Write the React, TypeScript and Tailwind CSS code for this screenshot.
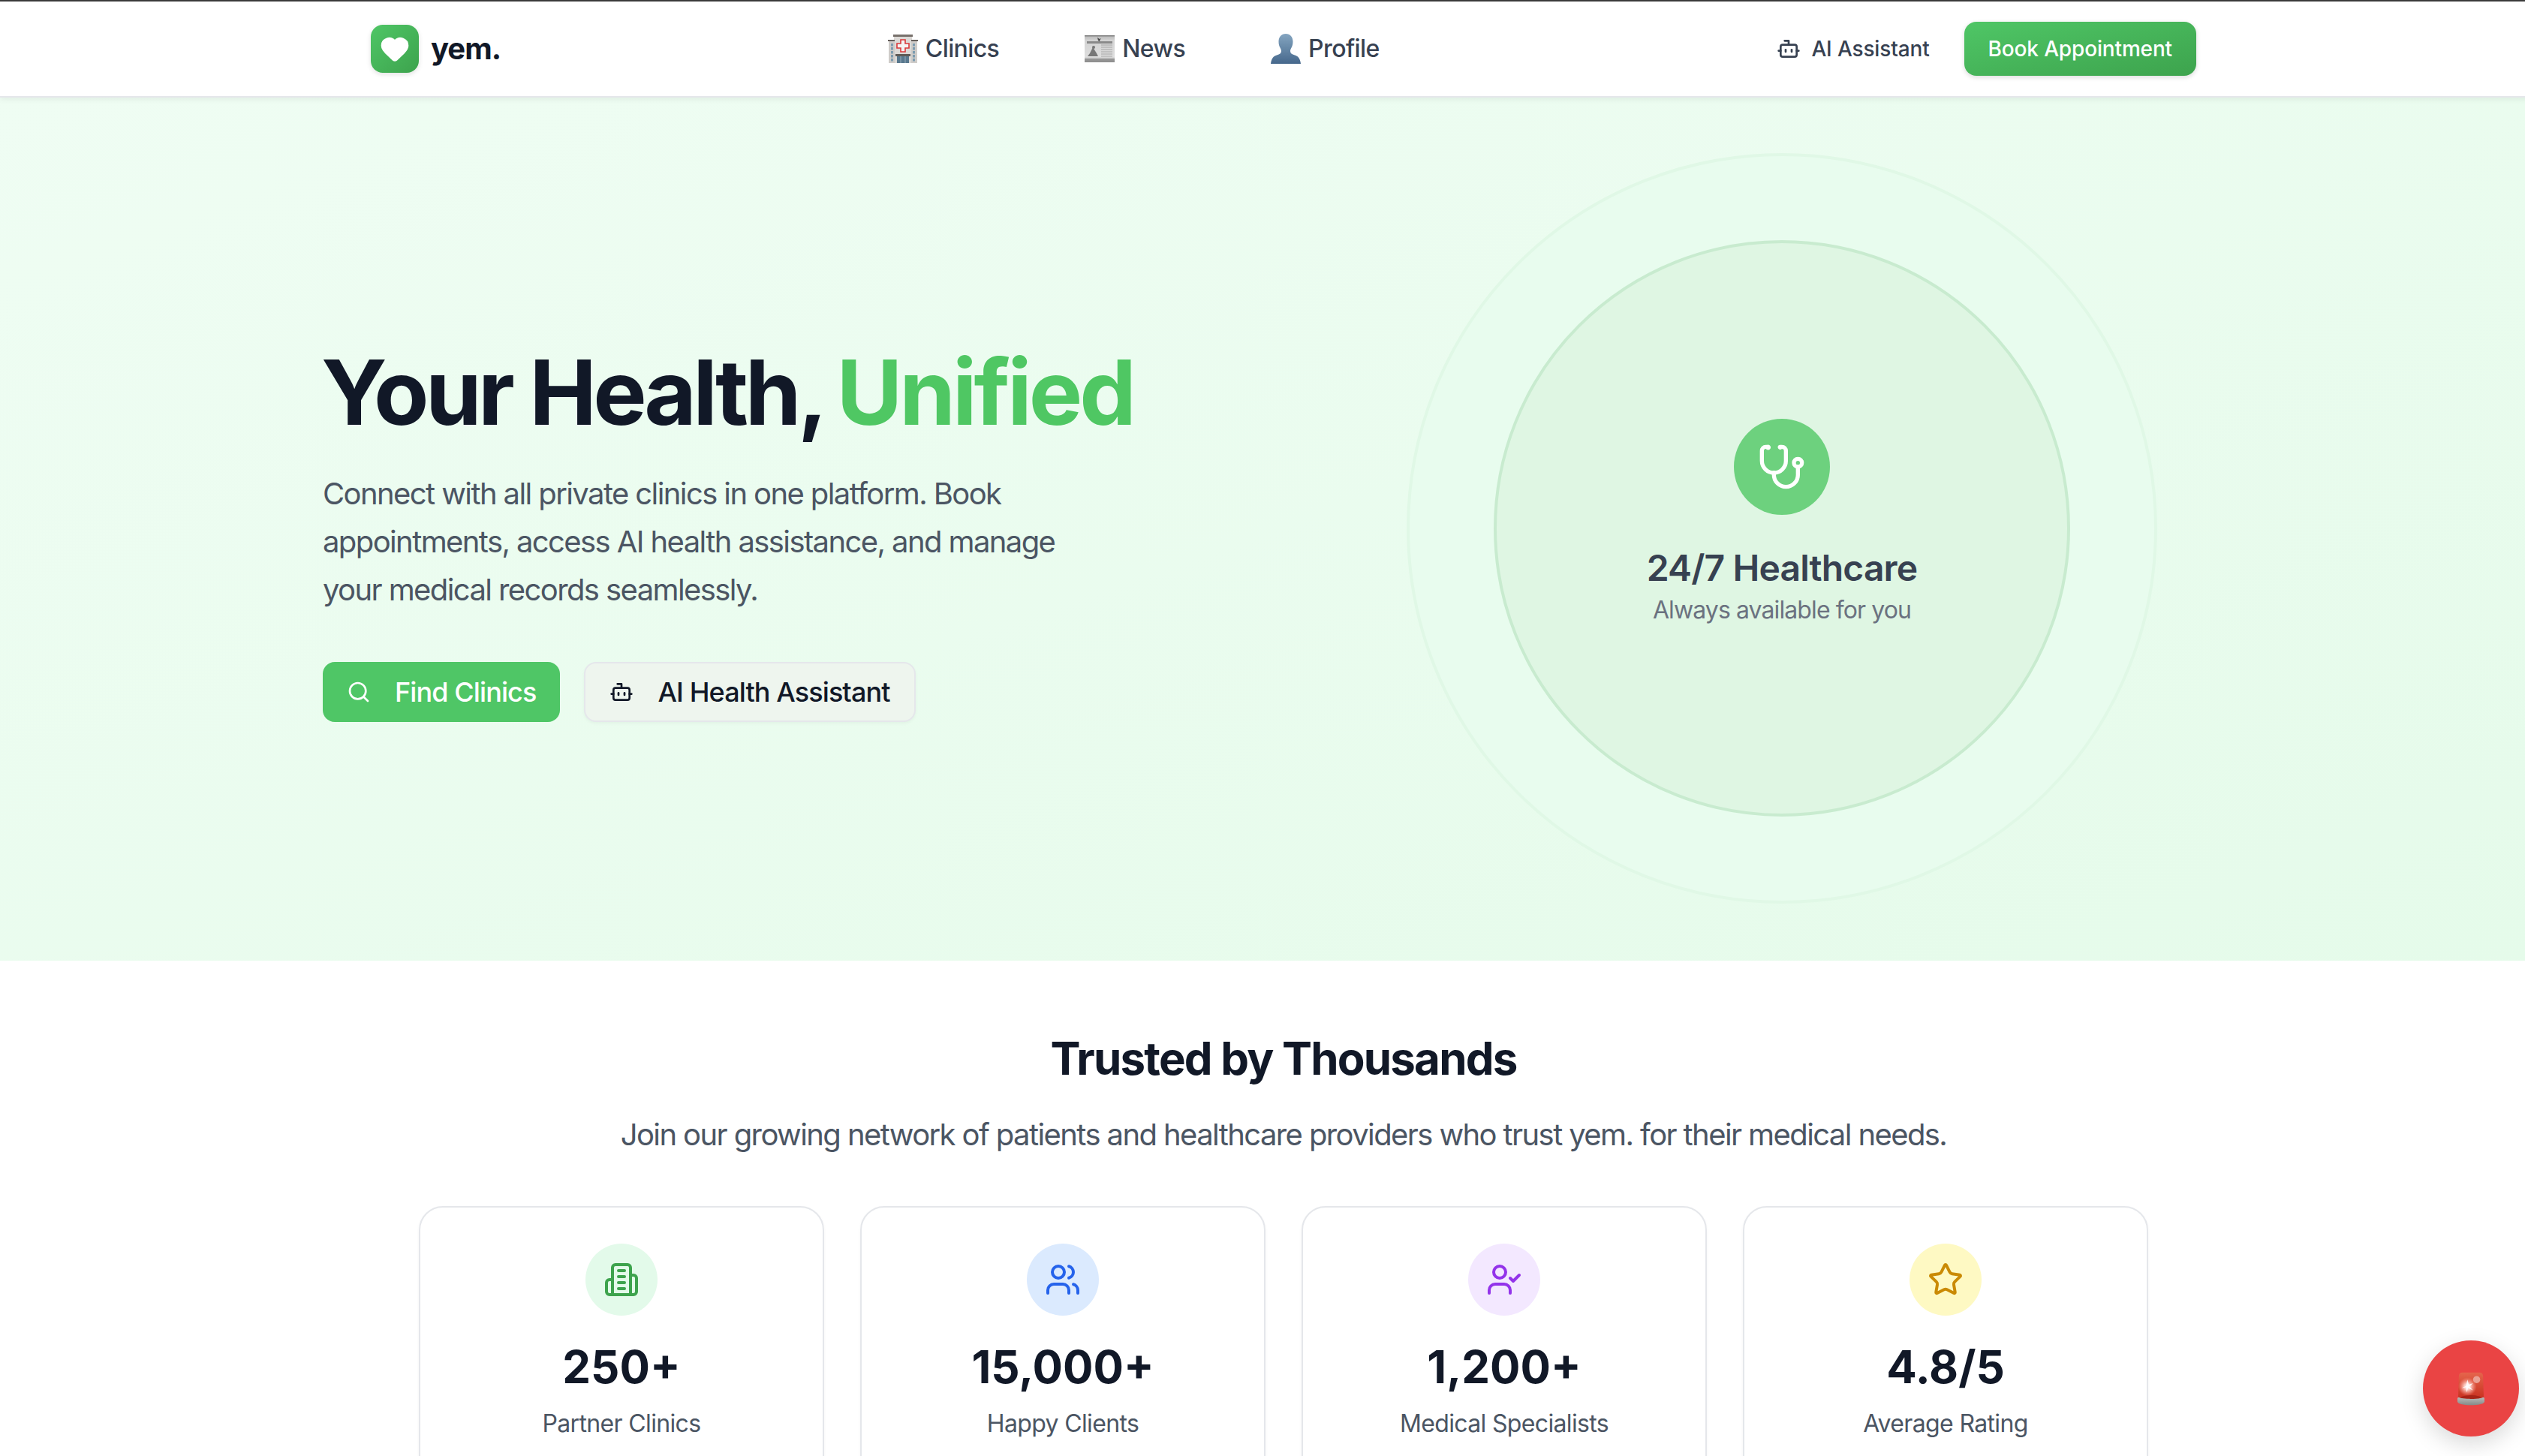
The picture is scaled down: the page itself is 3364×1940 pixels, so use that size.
import { Bot, Heart, Search, Star, UserCheck, Users } from 'lucide-react';
import type { ReactNode } from 'react';

function HospitalEmoji() {
  return (
    <svg width="40" height="40" viewBox="0 0 40 40" className="shrink-0">
      <rect x="8" y="2" width="24" height="37" fill="#dcd9d6" />
      <rect x="7" y="1" width="26" height="3" fill="#77706b" />
      <rect x="1" y="9" width="8" height="30" fill="#cfccc9" />
      <rect x="31" y="9" width="8" height="30" fill="#cfccc9" />
      <rect x="0" y="8" width="9" height="2" fill="#66605c" />
      <rect x="31" y="8" width="9" height="2" fill="#66605c" />
      {[13, 18, 23, 28, 33].map((y) => (
        <g key={y} fill="#7d9cb0">
          <rect x="4" y={y} width="3" height="3.5" />
          <rect x="33" y={y} width="3" height="3.5" />
        </g>
      ))}
      <path d="M17 8h6v5h5v6h-5v5h-6v-5h-5v-6h5z" fill="#f5f3f2" stroke="#d9383a" strokeWidth="1.6" />
      <rect x="10" y="27" width="20" height="3" fill="#5e5a56" />
      <rect x="12" y="30" width="16" height="9" fill="#58788e" />
      <path d="M17 30v9M23 30v9" stroke="#a8bac6" strokeWidth="0.8" />
    </svg>
  );
}

function NewspaperEmoji() {
  return (
    <svg width="40" height="38" viewBox="0 0 40 38" className="shrink-0">
      <defs>
        <linearGradient id="paper" x1="0" y1="0" x2="0" y2="1">
          <stop offset="0" stopColor="#b5b5b5" />
          <stop offset="0.2" stopColor="#d4d4d4" />
          <stop offset="0.8" stopColor="#dedede" />
          <stop offset="1" stopColor="#8c8c8c" />
        </linearGradient>
      </defs>
      <rect x="0" y="1" width="40" height="36" fill="url(#paper)" />
      <rect x="0" y="1" width="40" height="1.5" fill="#7f7f7f" />
      <path d="M17 4l3 2 2-1-2 3 1 2-3-2z" fill="#4b4b4b" />
      <rect x="3" y="9" width="34" height="3" fill="#8a8a8a" />
      <path d="M11 17l5 8 2 4H4l3-4z" fill="#777" />
      <circle cx="12" cy="17" r="2" fill="#777" />
      <path d="M22 14h15M22 17h15M22 20h15M22 23h15M22 26h15M22 29h15" stroke="#a5a5a5" strokeWidth="1.2" />
      <rect x="0" y="32" width="40" height="5" fill="#8d8d8d" opacity="0.8" />
    </svg>
  );
}

function PersonEmoji() {
  return (
    <svg width="40" height="40" viewBox="0 0 40 40" className="shrink-0">
      <defs>
        <linearGradient id="bust" x1="0" y1="0" x2="0" y2="1">
          <stop offset="0" stopColor="#84a5c0" />
          <stop offset="1" stopColor="#46688c" />
        </linearGradient>
      </defs>
      <path
        d="M20 0c6 0 9.500 4.500 9.500 10.500 0 3-.7 5.500-1.700 7.500-.9 1.800-1.800 3-1.800 5 0 3 2 4.300 6 5.600 4 1.300 7 3.500 8 11.400H0c1-7.900 4-10.100 8-11.400 4-1.300 6-2.600 6-5.600 0-2-.9-3.200-1.800-5-1-2-1.700-4.500-1.700-7.500C10.500 4.500 14 0 20 0z"
        fill="url(#bust)"
      />
    </svg>
  );
}

function SirenEmoji() {
  return (
    <svg width="36" height="47" viewBox="0 0 38 48">
      <defs>
        <linearGradient id="dome" x1="0" y1="0" x2="0" y2="1">
          <stop offset="0" stopColor="#e5654c" />
          <stop offset="1" stopColor="#c8301f" />
        </linearGradient>
        <linearGradient id="base" x1="0" y1="0" x2="0" y2="1">
          <stop offset="0" stopColor="#b9bbb9" />
          <stop offset="1" stopColor="#868886" />
        </linearGradient>
        <radialGradient id="flash">
          <stop offset="0" stopColor="#ffffff" />
          <stop offset="0.35" stopColor="#ffd8d0" stopOpacity="0.9" />
          <stop offset="1" stopColor="#ff9d8e" stopOpacity="0" />
        </radialGradient>
      </defs>
      <path d="M2 6c0-3 2-5 5-5h24c3 0 5 2 5 5l1 32H1z" fill="url(#dome)" />
      <ellipse cx="19" cy="37" rx="15" ry="4" fill="#a82417" />
      <circle cx="27" cy="11" r="5" fill="#eeb4aa" opacity="0.8" />
      <circle cx="14" cy="21" r="13" fill="url(#flash)" />
      <path d="M14 11l2 7 6-2-5 5 5 5-7-3-2 6-1-7-6 1 6-3z" fill="#fff" opacity="0.85" />
      <path d="M0 38c0-1 1-2 2-2 4 3 30 3 34 0 1 0 2 1 2 2v4c0 3-8 5-19 5S0 45 0 42z" fill="url(#base)" />
    </svg>
  );
}

function TowerIcon() {
  return (
    <svg width="48" height="48" viewBox="0 0 24 24" fill="none" stroke="#3da34d" strokeWidth="2" strokeLinecap="round" strokeLinejoin="round">
      <path d="M6 22V4a2 2 0 0 1 2-2h8a2 2 0 0 1 2 2v18Z" />
      <path d="M6 12H4a2 2 0 0 0-2 2v6a2 2 0 0 0 2 2h2" />
      <path d="M18 9h2a2 2 0 0 1 2 2v9a2 2 0 0 1-2 2h-2" />
      <path d="M10 6h4" />
      <path d="M10 10h4" />
      <path d="M10 14h4" />
      <path d="M10 18h4" />
    </svg>
  );
}

// older lucide stethoscope, the ear tips hook inward
function StethoscopeIcon() {
  return (
    <svg width="64" height="64" viewBox="0 0 24 24" fill="none" stroke="#ffffff" strokeWidth="2" strokeLinecap="round" strokeLinejoin="round">
      <path d="M4.800 2.300A.3.3 0 1 0 5 2H4a2 2 0 0 0-2 2v5a6 6 0 0 0 6 6a6 6 0 0 0 6-6V4a2 2 0 0 0-2-2h-1a.2.2 0 1 0 .3.3" />
      <path d="M8 15v1a6 6 0 0 0 6 6a6 6 0 0 0 6-6v-4" />
      <circle cx="20" cy="10" r="2" />
    </svg>
  );
}

function NavLink({ icon, label }: { icon: ReactNode; label: string }) {
  return (
    <a className="flex items-center gap-[10px] text-[32px] leading-[48px] font-medium tracking-[-0.6px] text-[#374151]">
      {icon}
      <span>{label}</span>
    </a>
  );
}

function StatCard({ icon, tint, value, label }: { icon: ReactNode; tint: string; value: string; label: string }) {
  return (
    <div className="flex h-[400px] flex-col items-center rounded-[32px] border-2 border-[#e5e7eb] bg-white p-12 shadow-[0_2px_4px_rgba(0,0,0,0.04)]">
      <div className={`flex h-24 w-24 items-center justify-center rounded-full ${tint}`}>{icon}</div>
      <div className="mt-[28px] text-[60px] leading-[80px] font-bold text-[#111827]">{value}</div>
      <div className="mt-[14px] text-[32px] leading-[44px] tracking-[-0.65px] text-[#4b5563]">{label}</div>
    </div>
  );
}

export default function App() {
  const stats = [
    { icon: <TowerIcon />, tint: 'bg-[#e3faea]', value: '250+', label: 'Partner Clinics' },
    { icon: <Users size={48} color="#2563eb" />, tint: 'bg-[#dbeafe]', value: '15,000+', label: 'Happy Clients' },
    { icon: <UserCheck size={48} color="#9333ea" />, tint: 'bg-[#f3e8ff]', value: '1,200+', label: 'Medical Specialists' },
    { icon: <Star size={48} color="#ca8a04" />, tint: 'bg-[#fef9c3]', value: '4.8/5', label: 'Average Rating' },
  ];

  return (
    <div className="relative h-[1940px] w-full overflow-hidden bg-white font-['Inter',sans-serif]">
      <div className="w-[3420px]">
        {/* Nav */}
        <header className="relative z-10 h-[130px] border-t-2 border-b-2 border-t-[#3a3a3a] border-b-[#e5e7eb] bg-white shadow-[0_2px_8px_rgba(0,0,0,0.07)]">
          <div className="mx-auto flex h-[126px] w-[2560px] items-center justify-between px-16">
            <div className="flex items-center gap-4">
              <div className="flex h-16 w-16 items-center justify-center rounded-2xl bg-gradient-to-br from-[#4fc666] to-[#3da34d] shadow-[0_2px_6px_rgba(0,0,0,0.12)]">
                <Heart size={40} color="#ffffff" fill="#ffffff" />
              </div>
              <span className="text-[40px] leading-[56px] font-bold tracking-[-1px] text-[#111827]">yem.</span>
            </div>
            <nav className="mr-[14px] flex items-center gap-[114px]">
              <NavLink icon={<HospitalEmoji />} label="Clinics" />
              <NavLink icon={<NewspaperEmoji />} label="News" />
              <NavLink icon={<PersonEmoji />} label="Profile" />
            </nav>
            <div className="flex items-center gap-[46px]">
              <a className="flex items-center gap-[14px] text-[28px] leading-10 font-medium tracking-[-0.15px] text-[#374151]">
                <Bot size={32} />
                AI Assistant
              </a>
              <a className="flex h-[72px] items-center rounded-2xl bg-gradient-to-br from-[#4fc666] to-[#3da34d] px-8 text-[28px] font-medium tracking-[-0.15px] text-white shadow-[0_2px_6px_rgba(0,0,0,0.15)]">
                Book Appointment
              </a>
            </div>
          </div>
        </header>

        {/* Hero */}
        <section className="h-[1150px] bg-gradient-to-br from-[#effdf3] to-[#e5fbea]">
          <div className="mx-auto grid h-full w-[2560px] grid-cols-2 items-center gap-24">
            <div>
              <h1 className="mb-[28px] -ml-[2px] text-[120px] leading-[150px] font-bold tracking-[-4.600px] text-[#111827]">
                Your Health, <span className="-ml-[4px] tracking-[-4px] text-[#4fc763]">Unified</span>
              </h1>
              <p className="mb-[64px] w-[1000px] text-[40px] leading-[64px] tracking-[-1.600px] text-[#4b5563]">
                Connect with all private clinics in one platform. Book appointments, access AI health assistance, and manage your medical records seamlessly.
              </p>
              <div className="flex gap-[32px]">
                <a className="flex h-20 items-center gap-[32px] rounded-2xl bg-[#4fc666] px-8 text-[36px] font-medium tracking-[-0.9px] text-white">
                  <Search size={32} />
                  Find Clinics
                </a>
                <a className="flex h-20 items-center gap-[32px] rounded-2xl border-2 border-[#e5e7eb] bg-[#eef5ee] px-8 text-[36px] font-medium tracking-[-0.9px] text-[#111827] shadow-[0_2px_4px_rgba(0,0,0,0.04)]">
                  <Bot size={32} />
                  AI Health Assistant
                </a>
              </div>
            </div>
            <div className="flex -translate-y-px justify-center">
              <div className="flex h-[1000px] w-[1000px] items-center justify-center rounded-full border-4 border-[#e0f8e6] bg-[#e8fcee]">
                <div className="flex h-[768px] w-[768px] flex-col items-center justify-center rounded-full border-4 border-[#c8ebcf] bg-[#dff6e3] pb-[13px]">
                  <div className="flex h-32 w-32 items-center justify-center rounded-full bg-[#6dd17e]">
                    <StethoscopeIcon />
                  </div>
                  <h3 className="mt-[39px] text-[48px] leading-[64px] font-semibold tracking-[-0.850px] text-[#374151]">24/7 Healthcare</h3>
                  <p className="text-[32px] leading-[48px] tracking-[-0.9px] text-[#6b7280]">Always available for you</p>
                </div>
              </div>
            </div>
          </div>
        </section>

        {/* Stats */}
        <section className="bg-white">
          <div className="mx-auto w-[2560px] pt-[90px] text-center">
            <h2 className="text-[60px] leading-[80px] font-bold tracking-[-1.800px] text-[#111827]">Trusted by Thousands</h2>
            <p className="mt-[32px] text-[40px] leading-[60px] tracking-[-1.600px] text-[#4b5563]">
              Join our growing network of patients and healthcare providers who trust yem. for their medical needs.
            </p>
            <div className="mx-auto mt-[65px] grid w-[2304px] grid-cols-4 gap-12">
              {stats.map((stat) => (
                <StatCard key={stat.label} {...stat} />
              ))}
            </div>
          </div>
        </section>
      </div>

      {/* Emergency button */}
      <button className="absolute right-2 bottom-[26px] flex h-32 w-32 items-center justify-center rounded-full bg-[#ea4444] shadow-[0_10px_30px_rgba(0,0,0,0.15)]">
        <SirenEmoji />
      </button>
    </div>
  );
}
